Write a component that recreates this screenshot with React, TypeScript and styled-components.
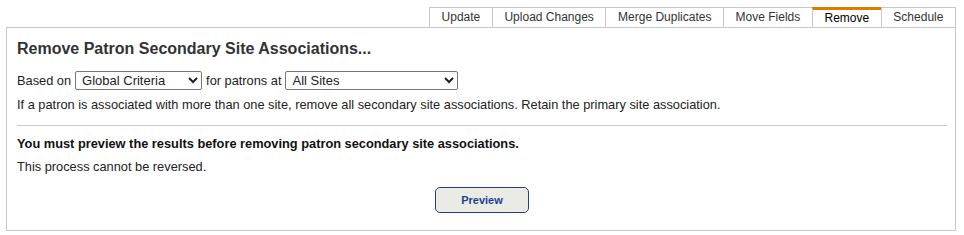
import styled, { createGlobalStyle } from 'styled-components';

const GlobalStyle = createGlobalStyle`
    body {
        margin: 0;
        background: #fff;
        font-family: Arial, "Liberation Sans", sans-serif;
        color: #222;
    }
`;

const tabs = ['Update', 'Upload Changes', 'Merge Duplicates', 'Move Fields', 'Remove', 'Schedule'];

export default function App() {
    return (
        <>
            <GlobalStyle />
            <Page>
                <TabBar>
                    {tabs.map((t) => (
                        <Tab key={t} $active={t === 'Remove'}>
                            {t}
                        </Tab>
                    ))}
                </TabBar>
                <Panel>
                    <Title>Remove Patron Secondary Site Associations...</Title>
                    <CriteriaRow>
                        Based on
                        <Select $width={127} defaultValue="global">
                            <option value="global">Global Criteria</option>
                        </Select>
                        for patrons at
                        <Select $width={173} defaultValue="all">
                            <option value="all">All Sites</option>
                        </Select>
                    </CriteriaRow>
                    <Text>
                        If a patron is associated with more than one site, remove all secondary site
                        associations. Retain the primary site association.
                    </Text>
                    <Divider />
                    <Warning>
                        You must preview the results before removing patron secondary site associations.
                    </Warning>
                    <Text>This process cannot be reversed.</Text>
                    <Actions>
                        <PreviewButton type="button">Preview</PreviewButton>
                    </Actions>
                </Panel>
            </Page>
        </>
    );
}

const Page = styled.div`
    padding: 7px 8px 4px 6px;
`;

const TabBar = styled.div`
    display: flex;
    justify-content: flex-end;
`;

const Tab = styled.div<{ $active?: boolean }>`
    box-sizing: border-box;
    height: 20px;
    padding: 0 11.6px;
    border-left: 1px solid #c8c8c8;
    border-top: ${(p) => (p.$active ? '3px solid #e07b00' : '1px solid #c8c8c8')};
    font-size: 12px;
    line-height: ${(p) => (p.$active ? '16px' : '18px')};
    color: ${(p) => (p.$active ? '#000' : '#333')};
    background: #fff;

    &:last-child {
        border-right: 1px solid #c8c8c8;
    }
`;

const Panel = styled.div`
    box-sizing: border-box;
    height: 204px;
    border: 1px solid #c8c8c8;
    padding: 11px 8px 17px 10px;
`;

const Title = styled.div`
    font-size: 16px;
    line-height: 20px;
    font-weight: bold;
    color: #333;
`;

const CriteriaRow = styled.div`
    display: flex;
    align-items: center;
    height: 20px;
    margin-top: 11px;
    font-size: 12.8px;
    color: #222;
`;

const Select = styled.select<{ $width: number }>`
    box-sizing: border-box;
    width: ${(p) => p.$width}px;
    height: 19px;
    margin: 0 4px;
    padding: 0 2px;
    font-family: Arial, "Liberation Sans", sans-serif;
    font-size: 13px;
    color: #222;
    border: 1px solid #767676;
    border-radius: 2px;
    background: #fff;
`;

const Text = styled.div`
    margin-top: 7px;
    font-size: 12.8px;
    line-height: 16px;
    color: #222;
`;

const Divider = styled.div`
    height: 1px;
    margin: 12px 0 0;
    background: #c8c8c8;
`;

const Warning = styled.div`
    margin-top: 10px;
    font-size: 12.8px;
    line-height: 16px;
    font-weight: bold;
    color: #111;
`;

const Actions = styled.div`
    display: flex;
    justify-content: center;
    margin-top: 12px;
`;

const PreviewButton = styled.button`
    box-sizing: border-box;
    width: 94px;
    height: 26px;
    border: 1px solid #1f3f8f;
    border-radius: 5px;
    background: #ebebe6;
    color: #1f3f8f;
    font-family: Arial, "Liberation Sans", sans-serif;
    font-size: 11px;
    font-weight: bold;
    cursor: pointer;
`;
